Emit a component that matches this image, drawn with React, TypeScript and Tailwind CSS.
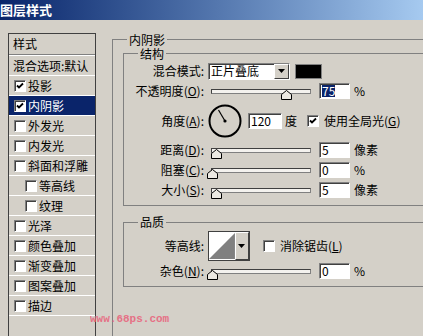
import type { ReactNode } from "react";

const cjk = "font-['Noto_Sans_CJK_SC','Liberation_Sans',sans-serif]";

function CheckBox({ checked = false }: { checked?: boolean }) {
  return (
    <span className="flex h-[12px] w-[12px] shrink-0 items-center justify-center border border-t-[#808080] border-l-[#808080] border-b-white border-r-white bg-white shadow-[inset_1px_1px_0_#404040]">
      {checked && (
        <svg width="8" height="8" viewBox="0 0 8 8" aria-hidden>
          <path d="M1 3.5 L3 5.5 L7 1.5" fill="none" stroke="#000" strokeWidth="1.8" />
        </svg>
      )}
    </span>
  );
}

function Thumb() {
  return (
    <svg width="11" height="10" viewBox="0 0 11 10" aria-hidden>
      <polygon points="0.5,9.5 0.5,4.5 5.5,0.5 10.5,4.5 10.5,9.5" fill="#ece9e2" stroke="#000" />
    </svg>
  );
}

function Slider({ at }: { at: number }) {
  return (
    <div className="relative h-[5px] w-[100px] border border-t-[#404040] border-l-[#404040] border-b-[#808080] border-r-[#808080] bg-[#f4f2ee]">
      <div className="absolute top-[0px]" style={{ left: at - 6 }}>
        <Thumb />
      </div>
    </div>
  );
}

function NumBox({ value, selected = false, w = 31 }: { value: string; selected?: boolean; w?: number }) {
  return (
    <div
      className="flex h-[16px] items-center border border-t-[#808080] border-l-[#808080] border-b-white border-r-white bg-white pl-[2px] text-[12px] leading-none shadow-[inset_1px_1px_0_#404040]"
      style={{ width: w }}
    >
      <span className={selected ? "bg-[#0a246a] text-white" : ""}>{value}</span>
    </div>
  );
}

function Key({ k }: { k: string }) {
  return (
    <>
      (<u className="underline-offset-1">{k}</u>)
    </>
  );
}

function Label({ children }: { children: ReactNode }) {
  return <span className="w-[80px] shrink-0 whitespace-nowrap text-right">{children}</span>;
}

function SliderRow({
  label,
  at,
  value,
  unit,
  selected = false,
}: {
  label: ReactNode;
  at: number;
  value: string;
  unit: string;
  selected?: boolean;
}) {
  return (
    <div className="flex h-[20px] items-center">
      <Label>{label}</Label>
      <div className="ml-[7px]">
        <Slider at={at} />
      </div>
      <div className="ml-[8px]">
        <NumBox value={value} selected={selected} />
      </div>
      <span className="ml-[4px]">{unit}</span>
    </div>
  );
}

function DownArrow() {
  return (
    <div className="flex h-full w-[15px] items-center justify-center border border-t-white border-l-white border-b-[#404040] border-r-[#404040] bg-[#d4d0c8]">
      <svg width="7" height="4" viewBox="0 0 7 4" aria-hidden>
        <polygon points="0,0 7,0 3.5,4" fill="#000" />
      </svg>
    </div>
  );
}

const sideItems = [
  { name: "投影", checked: true },
  { name: "内阴影", checked: true, active: true },
  { name: "外发光" },
  { name: "内发光" },
  { name: "斜面和浮雕" },
  { name: "等高线", sub: true },
  { name: "纹理", sub: true },
  { name: "光泽" },
  { name: "颜色叠加" },
  { name: "渐变叠加" },
  { name: "图案叠加" },
  { name: "描边" },
];

export default function App() {
  return (
    <div className={`relative h-[336px] w-[423px] overflow-hidden bg-[#d4d0c8] text-[12px] leading-[14px] text-black ${cjk}`}>
      <div className="flex h-[20px] items-center bg-linear-to-r from-[#0a246a] to-[#a6caf0] text-[13px] font-bold text-white">
        图层样式
      </div>

      <div className="flex items-start pl-[8px]">
        {/* style list */}
        <div className="mt-[13px] h-[320px] w-[88px] shrink-0 border border-[#404040] bg-[#d4d0c8]">
          <div className="flex h-[20px] items-center pl-[4px]">样式</div>
          <div className="h-[1px] bg-[#808080]" />
          <div className="h-[1px] bg-white" />
          <div className="flex h-[20px] items-center border-b border-white pl-[4px] whitespace-nowrap">混合选项:默认</div>
          {sideItems.map((it) => (
            <div
              key={it.name}
              className={`flex h-[20px] items-center gap-[2px] border-b border-white whitespace-nowrap ${it.sub ? "pl-[16px]" : "pl-[5px]"} ${it.active ? "bg-[#0a246a] text-white" : ""}`}
            >
              <CheckBox checked={it.checked} />
              <span>{it.name}</span>
            </div>
          ))}
        </div>

        {/* inner shadow */}
        <fieldset className="ml-[16px] mt-[13px] h-[330px] w-[340px] shrink-0 border border-[#808080]">
          <legend className="ml-[14px] h-[13px] px-[2px] leading-[13px]">内阴影</legend>

          <fieldset className="ml-[10px] mt-[1px] w-[320px] border border-[#808080] pb-[5px] pt-[1px]">
            <legend className="ml-[14px] h-[13px] px-[2px] leading-[13px]">结构</legend>

            <div className="flex h-[20px] items-center">
              <Label>混合模式:</Label>
              <div className="ml-[4px] flex h-[17px] w-[82px] items-center border border-t-[#808080] border-l-[#808080] border-b-white border-r-white bg-white shadow-[inset_1px_1px_0_#404040]">
                <span className="flex-1 pl-[2px]">正片叠底</span>
                <DownArrow />
              </div>
              <div className="ml-[5px] h-[15px] w-[27px] border border-[#808080] bg-black" />
            </div>

            <SliderRow label={<>不透明度<Key k="O" />:</>} at={75} value="75" unit="%" selected />

            <div className="flex h-[39px] items-center">
              <Label>角度<Key k="A" />:</Label>
              <svg className="ml-[4px]" width="34" height="34" viewBox="0 0 34 34" aria-hidden>
                <circle cx="17" cy="17" r="15.5" fill="none" stroke="#000" strokeWidth="2" />
                <line x1="17" y1="17" x2="10.5" y2="6" stroke="#000" strokeWidth="1.2" />
                <circle cx="17" cy="17" r="1.6" fill="#000" />
              </svg>
              <div className="ml-[6px]">
                <NumBox value="120" w={34} />
              </div>
              <span className="ml-[3px]">度</span>
              <span className="ml-[10px]">
                <CheckBox checked />
              </span>
              <span className="ml-[5px] whitespace-nowrap">
                使用全局光<Key k="G" />
              </span>
            </div>

            <SliderRow label={<>距离<Key k="D" />:</>} at={5} value="5" unit="像素" />
            <SliderRow label={<>阻塞<Key k="C" />:</>} at={1} value="0" unit="%" />
            <SliderRow label={<>大小<Key k="S" />:</>} at={5} value="5" unit="像素" />
          </fieldset>

          <fieldset className="ml-[10px] mt-[9px] w-[320px] border border-[#808080] pb-[5px]">
            <legend className="ml-[14px] h-[14px] px-[2px]">品质</legend>

            <div className="mt-[2px] flex h-[30px] items-center">
              <Label>等高线:</Label>
              <div className="ml-[4px] flex h-[30px] w-[42px] border border-[#404040] bg-white">
                <svg width="28" height="28" viewBox="0 0 28 28" aria-hidden>
                  <polygon points="0,0 28,0 0,28" fill="#fff" />
                  <polygon points="28,0 28,28 0,28" fill="#808080" />
                </svg>
                <DownArrow />
              </div>
              <span className="ml-[13px]">
                <CheckBox />
              </span>
              <span className="ml-[5px] whitespace-nowrap">
                消除锯齿<Key k="L" />
              </span>
            </div>

            <SliderRow label={<>杂色<Key k="N" />:</>} at={1} value="0" unit="%" />
          </fieldset>
        </fieldset>
      </div>

      <div className="absolute left-[90px] top-[313px] font-['Liberation_Mono',monospace] text-[11px] font-bold leading-[12px] text-[#e8677f] opacity-90">
        www.68ps.com
      </div>
    </div>
  );
}
